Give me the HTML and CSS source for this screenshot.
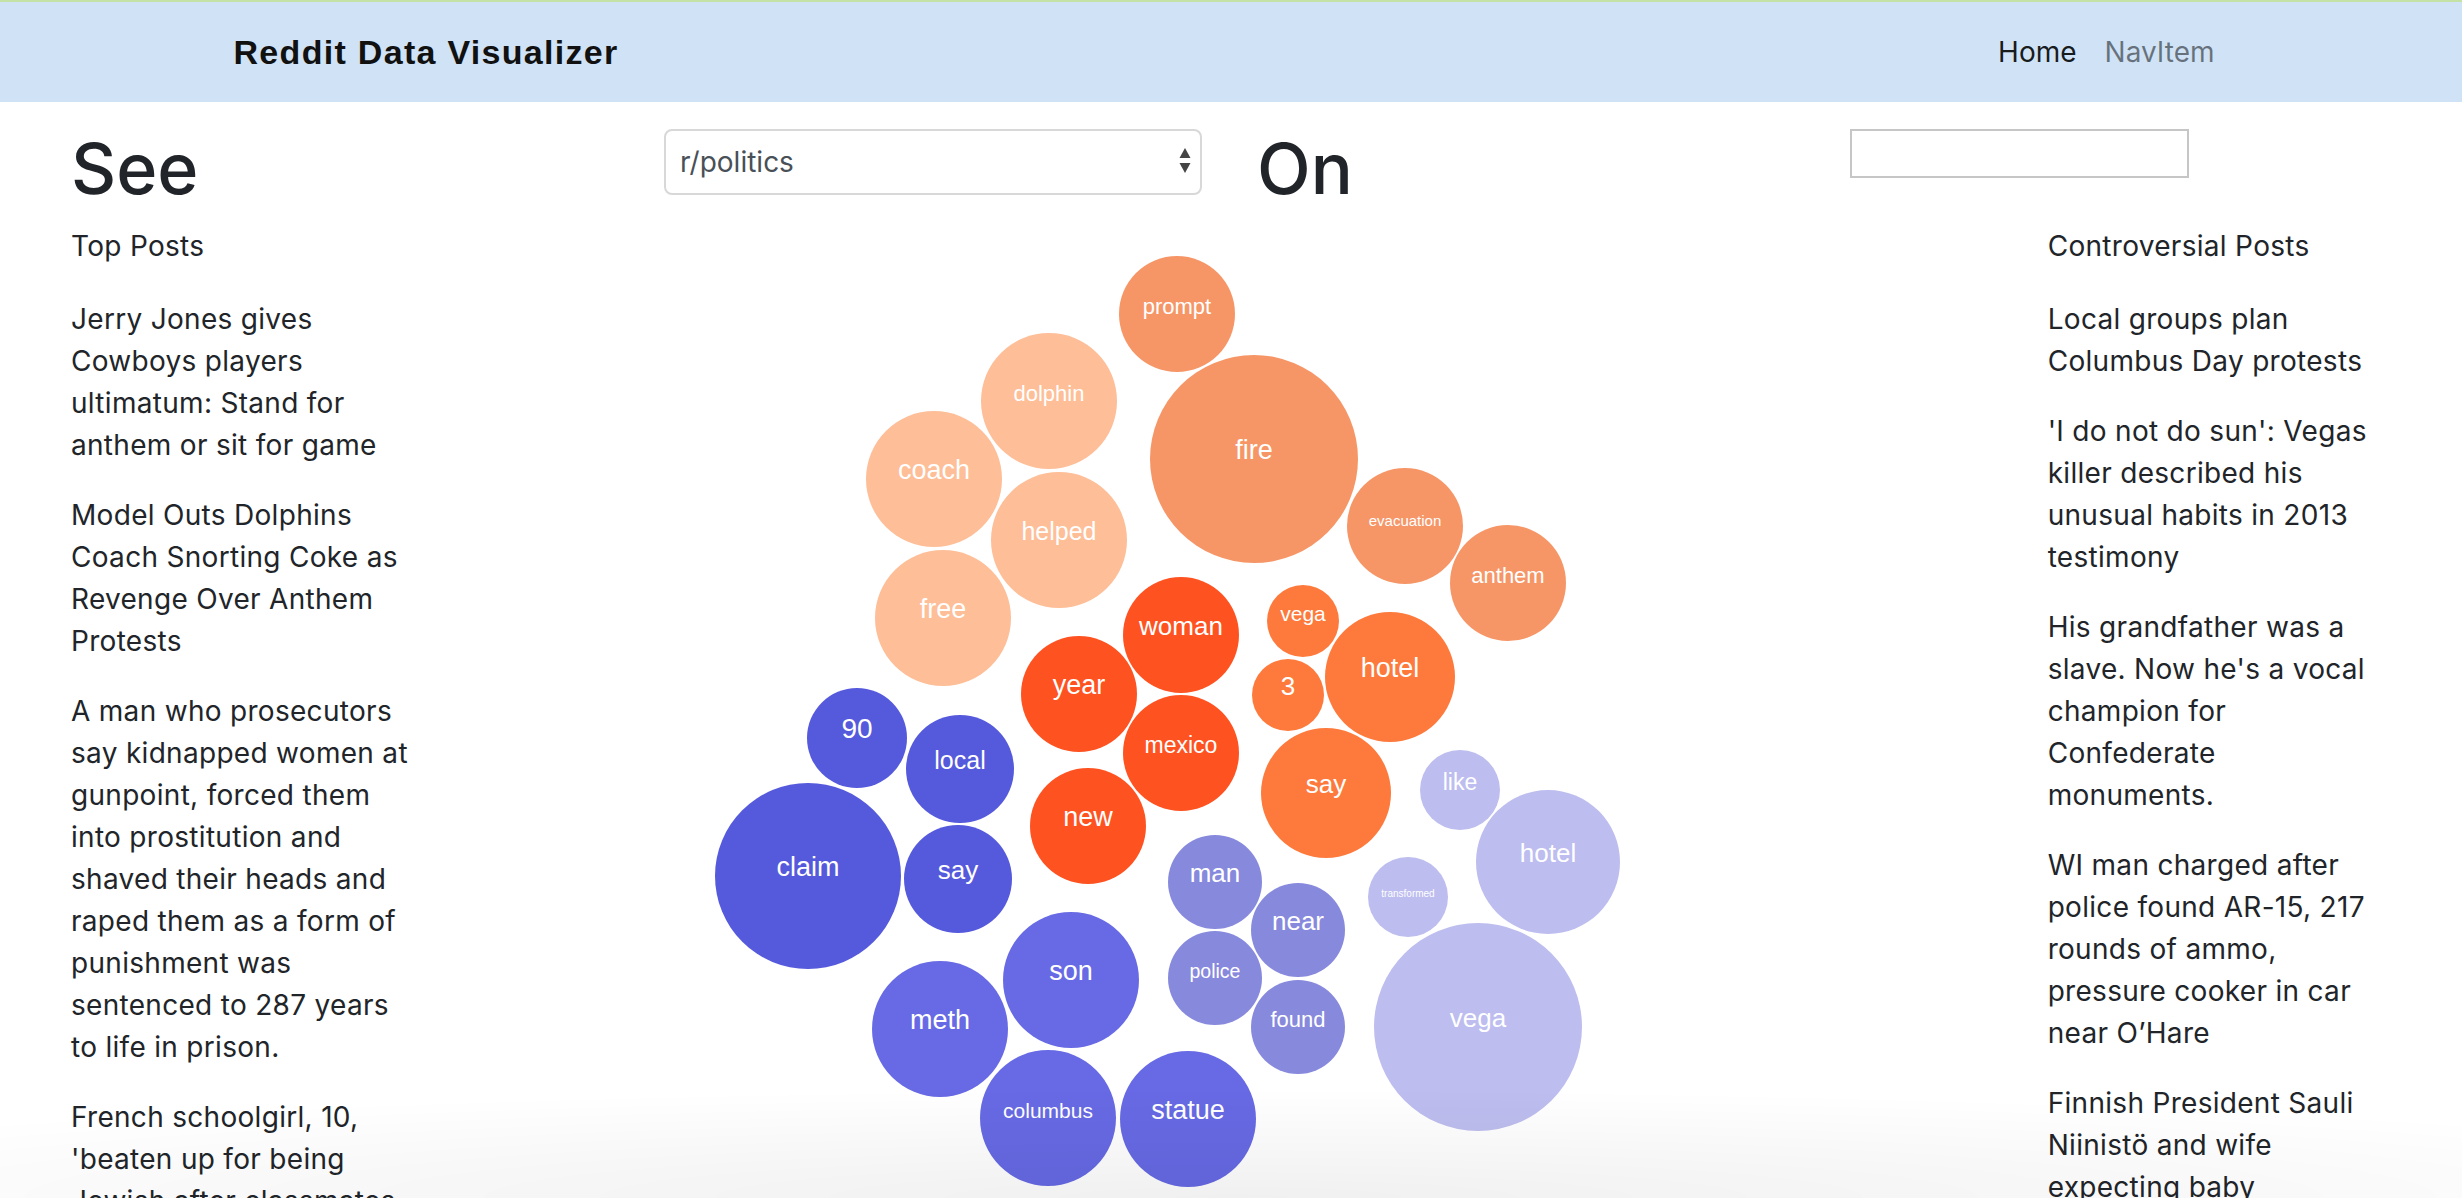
FILE: index.html
```html
<!DOCTYPE html>
<html lang="en">
<head>
<meta charset="utf-8">
<title>Reddit Data Visualizer</title>
<link rel="stylesheet" href="styles.css">
</head>
<body>
<nav class="navbar">
  <div class="nav-inner">
    <a class="brand" href="#">Reddit Data Visualizer</a>
    <ul class="nav-links">
      <li class="nav-item active">Home</li>
      <li class="nav-item">NavItem</li>
    </ul>
  </div>
</nav>

<main class="page">
  <div class="row controls">
    <div class="col"><h1 class="title">See</h1></div>
    <div class="col">
      <div class="select-wrap">
        <select class="sub-select">
          <option>r/politics</option>
          <option>r/news</option>
          <option>r/worldnews</option>
        </select>
        <svg class="select-arrows" width="12" height="26" viewBox="0 0 12 26">
          <path d="M6 0 L11.5 10 L0.5 10 Z" fill="#444"/>
          <path d="M0.5 15 L11.5 15 L6 25 Z" fill="#444"/>
        </svg>
      </div>
    </div>
    <div class="col"><h1 class="title">On</h1></div>
    <div class="col"><input class="date-input" type="text"></div>
  </div>

  <div class="row content">
    <div class="col side side-left">
      <p class="list-title">Top Posts</p>
      <p>Jerry Jones gives Cowboys players ultimatum: Stand for anthem or sit for game</p>
      <p>Model Outs Dolphins Coach Snorting Coke as Revenge Over Anthem Protests</p>
      <p>A man who prosecutors say kidnapped women at gunpoint, forced them into prostitution and shaved their heads and raped them as a form of punishment was sentenced to 287 years to life in prison.</p>
      <p>French schoolgirl, 10, 'beaten up for being Jewish after classmates found out her religion'</p>
    </div>

    <div class="col chart">
      <svg class="bubbles" width="1529" height="980" viewBox="466 225 1529 980">
        <g class="c-peach">
          <circle cx="1049" cy="401" r="68"/>
          <circle cx="934" cy="479" r="68"/>
          <circle cx="1059" cy="540" r="68"/>
          <circle cx="943" cy="618" r="68"/>
        </g>
        <g class="c-salmon">
          <circle cx="1177" cy="314" r="58"/>
          <circle cx="1254" cy="459" r="104"/>
          <circle cx="1405" cy="526" r="58"/>
          <circle cx="1508" cy="583" r="58"/>
        </g>
        <g class="c-red">
          <circle cx="1181" cy="635" r="58"/>
          <circle cx="1079" cy="694" r="58"/>
          <circle cx="1181" cy="753" r="58"/>
          <circle cx="1088" cy="826" r="58"/>
        </g>
        <g class="c-orange">
          <circle cx="1303" cy="621" r="36"/>
          <circle cx="1288" cy="695" r="36"/>
          <circle cx="1390" cy="677" r="65"/>
          <circle cx="1326" cy="793" r="65"/>
        </g>
        <g class="c-blue">
          <circle cx="857" cy="738" r="50"/>
          <circle cx="960" cy="769" r="54"/>
          <circle cx="808" cy="876" r="93"/>
          <circle cx="958" cy="879" r="54"/>
        </g>
        <g class="c-indigo">
          <circle cx="1071" cy="980" r="68"/>
          <circle cx="940" cy="1029" r="68"/>
          <circle cx="1048" cy="1118" r="68"/>
          <circle cx="1188" cy="1119" r="68"/>
        </g>
        <g class="c-periwinkle">
          <circle cx="1215" cy="882" r="47"/>
          <circle cx="1298" cy="930" r="47"/>
          <circle cx="1215" cy="978" r="47"/>
          <circle cx="1298" cy="1027" r="47"/>
        </g>
        <g class="c-lavender">
          <circle cx="1460" cy="790" r="40"/>
          <circle cx="1408" cy="897" r="40"/>
          <circle cx="1548" cy="862" r="72"/>
          <circle cx="1478" cy="1027" r="104"/>
        </g>
        <g class="labels">
          <text x="1049" y="401" font-size="22">dolphin</text>
          <text x="934" y="479" font-size="27">coach</text>
          <text x="1059" y="540" font-size="25">helped</text>
          <text x="943" y="618" font-size="27">free</text>
          <text x="1177" y="314" font-size="22">prompt</text>
          <text x="1254" y="459" font-size="27">fire</text>
          <text x="1405" y="526" font-size="15">evacuation</text>
          <text x="1508" y="583" font-size="22">anthem</text>
          <text x="1181" y="635" font-size="26">woman</text>
          <text x="1079" y="694" font-size="27">year</text>
          <text x="1181" y="753" font-size="23">mexico</text>
          <text x="1088" y="826" font-size="27">new</text>
          <text x="1303" y="621" font-size="21">vega</text>
          <text x="1288" y="695" font-size="26">3</text>
          <text x="1390" y="677" font-size="27">hotel</text>
          <text x="1326" y="793" font-size="26">say</text>
          <text x="857" y="738" font-size="28">90</text>
          <text x="960" y="769" font-size="25">local</text>
          <text x="808" y="876" font-size="27">claim</text>
          <text x="958" y="879" font-size="26">say</text>
          <text x="1071" y="980" font-size="27">son</text>
          <text x="940" y="1029" font-size="27">meth</text>
          <text x="1048" y="1118" font-size="21">columbus</text>
          <text x="1188" y="1119" font-size="27">statue</text>
          <text x="1215" y="882" font-size="26">man</text>
          <text x="1298" y="930" font-size="26">near</text>
          <text x="1215" y="978" font-size="19.5">police</text>
          <text x="1298" y="1027" font-size="22">found</text>
          <text x="1460" y="790" font-size="23">like</text>
          <text x="1408" y="897" font-size="10">transformed</text>
          <text x="1548" y="862" font-size="26">hotel</text>
          <text x="1478" y="1027" font-size="26">vega</text>
        </g>
      </svg>
    </div>

    <div class="col side side-right">
      <p class="list-title">Controversial Posts</p>
      <p>Local groups plan Columbus Day protests</p>
      <p>'I do not do sun': Vegas killer described his unusual habits in 2013 testimony</p>
      <p>His grandfather was a slave. Now he's a vocal champion for Confederate monuments.</p>
      <p>WI man charged after police found AR-15, 217 rounds of ammo, pressure cooker in car near O’Hare</p>
      <p>Finnish President Sauli Niinistö and wife expecting baby</p>
    </div>
  </div>
</main>

<div class="bottom-fade"></div>
</body>
</html>
```

FILE: styles.css
```css
* {
  box-sizing: border-box;
}

body {
  margin: 0;
  font-family: Inter, "Noto Sans", "Liberation Sans", sans-serif;
  font-size: 28px;
  line-height: 1.5;
  color: #212529;
  background: #fff;
}

/* ---------- navbar ---------- */
.navbar {
  border-top: 2px solid #c4e2a6;
  background: #cfe2f6;
  height: 102px;
  display: flex;
  align-items: center;
}

.nav-inner {
  width: 1995px;
  margin: 0 auto;
  display: flex;
  align-items: center;
  justify-content: space-between;
}

.brand {
  font-family: "Liberation Sans", Arial, sans-serif;
  font-weight: bold;
  font-size: 34px;
  letter-spacing: 1.3px;
  color: #111;
  text-decoration: none;
  line-height: 1.5;
}

.nav-links {
  display: flex;
  list-style: none;
  margin: 0;
  padding: 0;
}

.nav-item {
  padding: 0 14px;
  color: rgba(0, 0, 0, 0.5);
}

.nav-item.active {
  color: rgba(0, 0, 0, 0.9);
}

/* ---------- page grid ---------- */
.page {
  padding: 0 45px;
}

.row {
  display: grid;
}

.col {
  padding: 0 26px;
  min-width: 0;
}

.controls {
  grid-template-columns: repeat(4, 1fr);
  margin-top: 25px;
}

.content {
  grid-template-columns: 2fr 8fr 2fr;
}

.title {
  font-size: 70px;
  font-weight: 500;
  line-height: 84px;
  margin: 0 0 14px;
}

/* ---------- select ---------- */
.select-wrap {
  position: relative;
  width: 538px;
  margin-top: 2px;
}

.sub-select {
  appearance: none;
  -webkit-appearance: none;
  display: block;
  width: 100%;
  height: 66px;
  padding: 0 40px 0 14px;
  font-family: inherit;
  font-size: 28px;
  color: #495057;
  background: #fff;
  border: 2px solid #d8d8d8;
  border-radius: 8px;
}

.select-arrows {
  position: absolute;
  right: 11px;
  top: 19px;
  pointer-events: none;
}

/* ---------- text input ---------- */
.date-input {
  display: block;
  width: 339px;
  height: 49px;
  margin-top: 2px;
  border: 2px solid #c6c6c6;
  background: #fff;
  font-family: inherit;
  font-size: 24px;
}

/* ---------- side columns ---------- */
.side p {
  margin: 0 0 28px;
  letter-spacing: 0.3px;
}

.side .list-title {
  margin-bottom: 31px;
}

.side-left p {
  max-width: 345px;
}

.side-right p {
  max-width: 330px;
}

/* ---------- bubble chart ---------- */
.bubbles {
  display: block;
}

.c-peach circle { fill: #fdbe98; }
.c-salmon circle { fill: #f69667; }
.c-red circle { fill: #fe5221; }
.c-orange circle { fill: #fd7a3c; }
.c-blue circle { fill: #5559dc; }
.c-indigo circle { fill: #676ae4; }
.c-periwinkle circle { fill: #8789dd; }
.c-lavender circle { fill: #bdbdef; }

.labels text {
  font-family: "Liberation Sans", Arial, sans-serif;
  fill: #fff;
  text-anchor: middle;
}

/* ---------- bottom shading ---------- */
.bottom-fade {
  position: fixed;
  left: 0;
  right: 0;
  bottom: 0;
  height: 110px;
  pointer-events: none;
  background: radial-gradient(ellipse 70% 100% at 50% 100%, rgba(0, 0, 0, 0.06), rgba(0, 0, 0, 0));
}
```
